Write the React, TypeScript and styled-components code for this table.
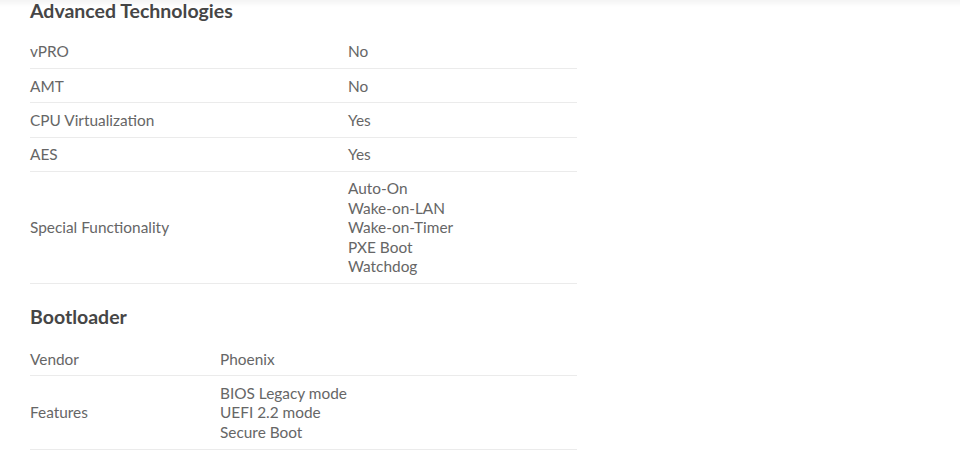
import React from "react";
import styled, { createGlobalStyle } from "styled-components";

const GlobalStyle = createGlobalStyle`
  html, body { margin: 0; padding: 0; background: #ffffff; }
  body { font-family: Lato, "Open Sans", sans-serif; -webkit-font-smoothing: antialiased; }
`;

const TopShade = styled.div`
  position: fixed;
  top: 0;
  left: 0;
  right: 0;
  height: 7px;
  background: linear-gradient(to bottom, rgba(0, 0, 0, 0.045), rgba(0, 0, 0, 0));
  pointer-events: none;
`;

const Page = styled.div`
  padding: 0 30px;
  width: 547px;
`;

const Section = styled.section`
  display: flex;
  flex-direction: column;
`;

const Heading = styled.h2<{ $top: number; $bottom: number }>`
  margin: ${(p) => p.$top}px 0 ${(p) => p.$bottom}px 0;
  font-family: Lato, sans-serif;
  font-weight: 700;
  font-size: 19.5px;
  line-height: 24px;
  color: #464646;
`;

const Table = styled.div`
  display: flex;
  flex-direction: column;
`;

const Row = styled.div<{ $label: number }>`
  display: grid;
  grid-template-columns: ${(p) => p.$label}px 1fr;
  align-items: center;
  padding: 7.4px 0 6.2px;
  border-bottom: 1px solid #ebebeb;
  font-size: 15.4px;
  line-height: 19.6px;
  color: #666666;
`;

const Label = styled.div``;

const Values = styled.div`
  display: flex;
  flex-direction: column;
`;

type Item = { label: string; values: string[] };

const advanced: Item[] = [
  { label: "vPRO", values: ["No"] },
  { label: "AMT", values: ["No"] },
  { label: "CPU Virtualization", values: ["Yes"] },
  { label: "AES", values: ["Yes"] },
  {
    label: "Special Functionality",
    values: ["Auto-On", "Wake-on-LAN", "Wake-on-Timer", "PXE Boot", "Watchdog"],
  },
];

const boot: Item[] = [
  { label: "Vendor", values: ["Phoenix"] },
  { label: "Features", values: ["BIOS Legacy mode", "UEFI 2.2 mode", "Secure Boot"] },
];

function SpecTable({ items, label }: { items: Item[]; label: number }) {
  return (
    <Table>
      {items.map((it) => (
        <Row key={it.label} $label={label}>
          <Label>{it.label}</Label>
          <Values>
            {it.values.map((v) => (
              <span key={v}>{v}</span>
            ))}
          </Values>
        </Row>
      ))}
    </Table>
  );
}

export default function App() {
  return (
    <>
      <GlobalStyle />
      <Page>
        <Section>
          <Heading $top={-1} $bottom={12}>
            Advanced Technologies
          </Heading>
          <SpecTable items={advanced} label={318} />
        </Section>
        <Section>
          <Heading $top={21} $bottom={13}>
            Bootloader
          </Heading>
          <SpecTable items={boot} label={190} />
        </Section>
      </Page>
      <TopShade />
    </>
  );
}
